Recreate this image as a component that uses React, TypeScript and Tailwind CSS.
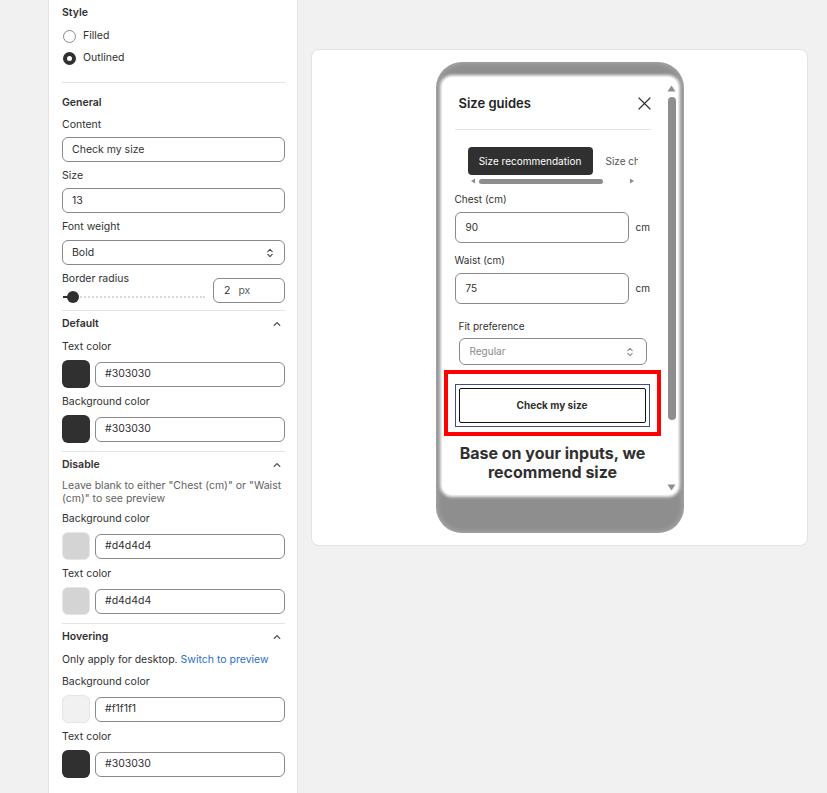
import type { ReactNode } from 'react';

function ChevronUp() {
  return (
    <svg width="10" height="10" viewBox="0 0 10 10" fill="none" className="text-[#4a4a4a]">
      <path d="M2.2 6.4 5 3.6l2.8 2.8" stroke="currentColor" strokeWidth="1.3" strokeLinecap="round" strokeLinejoin="round" />
    </svg>
  );
}

function SelectChevrons({ color = '#4a4a4a' }: { color?: string }) {
  return (
    <svg width="8" height="12" viewBox="0 0 8 12" fill="none">
      <path d="M1.8 4.6 4 2.4l2.2 2.2M1.8 7.4 4 9.6l2.2-2.2" stroke={color} strokeWidth="1.1" strokeLinecap="round" strokeLinejoin="round" />
    </svg>
  );
}

function Divider({ className = '' }: { className?: string }) {
  return <div className={`h-px bg-[#e3e3e3] ${className}`} />;
}

function Label({ children, className = '' }: { children: ReactNode; className?: string }) {
  return <p className={`text-[10.5px] leading-[14px] text-[#303030] ${className}`}>{children}</p>;
}

function TextInput({ value, className = '' }: { value: string; className?: string }) {
  return (
    <div className={`flex h-[25px] items-center rounded-[6px] border border-[#8a8a8a] bg-white px-[9px] text-[10.5px] text-[#303030] ${className}`}>
      {value}
    </div>
  );
}

function SectionHeader({ title, className = '' }: { title: string; className?: string }) {
  return (
    <div className={`flex h-[14px] items-center justify-between ${className}`}>
      <p className="text-[10.5px] font-semibold leading-[14px] text-[#303030]">{title}</p>
      <span className="mr-[3px]">
        <ChevronUp />
      </span>
    </div>
  );
}

function ColorRow({ swatch, value, className = '' }: { swatch: string; value: string; className?: string }) {
  const light = swatch !== '#303030';
  return (
    <div className={`flex items-center gap-[5px] ${className}`}>
      <div
        className={`h-[28px] w-[28px] shrink-0 rounded-[6px] ${light ? 'border border-[#e6e6e6]' : ''}`}
        style={{ backgroundColor: swatch }}
      />
      <TextInput value={value} className="flex-1" />
    </div>
  );
}

function SettingsPanel() {
  return (
    <aside className="min-h-[793px] w-[250px] shrink-0 border-x border-[#e3e3e3] bg-white pl-[13px] pr-[12px] pt-[6px]">
      <p className="text-[10.5px] font-semibold leading-[14px] text-[#303030]">Style</p>
      <div className="mt-[9px] flex h-[14px] items-center gap-[7px]">
        <span className="ml-px h-[13px] w-[13px] rounded-full border border-[#8a8a8a] bg-white" />
        <span className="text-[10.5px] text-[#303030]">Filled</span>
      </div>
      <div className="mt-[8px] flex h-[14px] items-center gap-[7px]">
        <span className="ml-px h-[13px] w-[13px] rounded-full border-[4px] border-[#303030] bg-white" />
        <span className="text-[10.5px] text-[#303030]">Outlined</span>
      </div>
      <Divider className="mt-[17px]" />

      <p className="mt-[13px] text-[10.5px] font-semibold leading-[14px] text-[#303030]">General</p>
      <Label className="mt-[8px]">Content</Label>
      <TextInput value="Check my size" className="mt-[5px]" />
      <Label className="mt-[7px]">Size</Label>
      <TextInput value="13" className="mt-[5px]" />
      <Label className="mt-[7px]">Font weight</Label>
      <div className="mt-[6px] flex h-[25px] items-center justify-between rounded-[6px] border border-[#8a8a8a] bg-white pl-[9px] pr-[10px] text-[10.5px] text-[#303030]">
        Bold
        <SelectChevrons />
      </div>
      <div className="mt-[7px] flex items-end gap-[8px]">
        <div className="flex-1">
          <Label>Border radius</Label>
          <div className="relative mt-[5px] flex h-[12px] items-center pl-px">
            <div className="h-[2px] w-[10px] bg-[#303030]" />
            <div className="h-0 flex-1 border-t-2 border-dotted border-[#d9d9d9]" />
            <span className="absolute left-[5px] top-0 h-[12px] w-[12px] rounded-full bg-[#303030]" />
          </div>
        </div>
        <div className="flex h-[25px] w-[72px] items-center gap-[8px] rounded-[6px] border border-[#8a8a8a] px-[10px] text-[10.5px] text-[#303030]">
          <span>2</span>
          <span className="text-[#616161]">px</span>
        </div>
      </div>
      <Divider className="mt-[7px]" />

      <SectionHeader title="Default" className="mt-[6px]" />
      <Label className="mt-[9px]">Text color</Label>
      <ColorRow swatch="#303030" value="#303030" className="mt-[6px]" />
      <Label className="mt-[7px]">Background color</Label>
      <ColorRow swatch="#303030" value="#303030" className="mt-[6px]" />
      <Divider className="mt-[8px]" />

      <SectionHeader title="Disable" className="mt-[6px]" />
      <p className="mt-[7px] text-[10.5px] leading-[13px] text-[#616161]">
        Leave blank to either "Chest (cm)" or "Waist (cm)" to see preview
      </p>
      <Label className="mt-[7px]">Background color</Label>
      <ColorRow swatch="#d4d4d4" value="#d4d4d4" className="mt-[6px]" />
      <Label className="mt-[7px]">Text color</Label>
      <ColorRow swatch="#d4d4d4" value="#d4d4d4" className="mt-[6px]" />
      <Divider className="mt-[8px]" />

      <SectionHeader title="Hovering" className="mt-[6px]" />
      <p className="mt-[9px] text-[10.5px] leading-[14px] text-[#303030]">
        Only apply for desktop. <span className="text-[#2c6ecb]">Switch to preview</span>
      </p>
      <Label className="mt-[8px]">Background color</Label>
      <ColorRow swatch="#f1f1f1" value="#f1f1f1" className="mt-[6px]" />
      <Label className="mt-[7px]">Text color</Label>
      <ColorRow swatch="#303030" value="#303030" className="mt-[6px]" />
    </aside>
  );
}

function PhoneScrollbar() {
  return (
    <div className="flex w-[12px] shrink-0 flex-col items-center pt-[8px] pb-[4px]">
      <svg width="9" height="7" viewBox="0 0 9 7">
        <path d="M4.5 0.5 8.5 6.5h-8z" fill="#8e8e8e" />
      </svg>
      <div className="mt-[5px] h-[323px] w-[8px] rounded-full bg-[#8e8e8e]" />
      <div className="flex-1" />
      <svg width="9" height="7" viewBox="0 0 9 7">
        <path d="M0.5 0.5h8l-4 6z" fill="#8e8e8e" />
      </svg>
    </div>
  );
}

function PhonePreview() {
  return (
    <div className="h-[471px] w-[248px] rounded-[26px] bg-[#8e8e8e] px-[6px] pt-[15px] shadow-[inset_0_0_6px_rgba(255,255,255,0.35)]">
      <div className="flex h-[418px] overflow-hidden rounded-[10px] bg-white shadow-[0_0_3px_2px_rgba(255,255,255,0.9)]">
        <div className="flex-1 overflow-hidden pl-[13px] pr-[15px]">
          <div className="flex items-center justify-between pl-[4px] pt-[18px]">
            <p className="text-[13px] font-semibold leading-[16px] text-[#222]">Size guides</p>
            <svg width="13" height="13" viewBox="0 0 13 13" fill="none">
              <path d="M1 1l11 11M12 1 1 12" stroke="#333" strokeWidth="1.2" strokeLinecap="round" />
            </svg>
          </div>
          <Divider className="mt-[18px]" />

          <div className="ml-[13px] mt-[17px] w-[170px] overflow-hidden">
            <div className="flex items-center gap-[13px] whitespace-nowrap">
              <span className="flex h-[28px] w-[125px] shrink-0 items-center justify-center rounded-[4px] bg-[#303030] text-[10px] text-white">
                Size recommendation
              </span>
              <span className="text-[10px] text-[#555]">Size chart</span>
            </div>
            <div className="mt-[2px] flex h-[8px] items-center">
              <svg width="6" height="6" viewBox="0 0 6 6" className="ml-[2px]">
                <path d="M5 0.5v5L1 3z" fill="#8e8e8e" />
              </svg>
              <div className="ml-[3px] h-[5px] w-[124px] rounded-full bg-[#8e8e8e]" />
              <div className="flex-1" />
              <svg width="6" height="6" viewBox="0 0 6 6" className="mr-[3px]">
                <path d="M1 0.5v5L5 3z" fill="#8e8e8e" />
              </svg>
            </div>
          </div>

          <p className="mt-[8px] text-[10px] leading-[13px] text-[#303030]">Chest (cm)</p>
          <div className="mt-[6px] flex items-center gap-[7px]">
            <div className="flex h-[31px] w-[174px] shrink-0 items-center rounded-[6px] border border-[#8a8a8a] pl-[10px] text-[10px] text-[#303030]">
              90
            </div>
            <span className="text-[10px] text-[#303030]">cm</span>
          </div>
          <p className="mt-[11px] text-[10px] leading-[13px] text-[#303030]">Waist (cm)</p>
          <div className="mt-[6px] flex items-center gap-[7px]">
            <div className="flex h-[31px] w-[174px] shrink-0 items-center rounded-[6px] border border-[#8a8a8a] pl-[10px] text-[10px] text-[#303030]">
              75
            </div>
            <span className="text-[10px] text-[#303030]">cm</span>
          </div>

          <div className="pl-[4px] pr-[4px]">
            <p className="mt-[16px] text-[10px] leading-[13px] text-[#303030]">Fit preference</p>
            <div className="mt-[5px] flex h-[27px] items-center justify-between rounded-[6px] border border-[#8a8a8a] pl-[10px] pr-[12px] text-[10px] text-[#8a8a8a]">
              Regular
              <SelectChevrons color="#8a8a8a" />
            </div>
          </div>

          <div className="-ml-[11px] mt-[5px] w-[217px] border-[4px] border-[#ff0000] px-[7px] pb-[5px] pt-[10px]">
            <div className="border border-[#3b4f8f] p-[3px]">
              <div className="flex h-[35px] items-center justify-center rounded-[2px] border border-[#111] text-[10px] font-bold text-[#303030]">
                Check my size
              </div>
            </div>
          </div>

          <p className="mt-[8px] text-center text-[16px] font-bold leading-[19px] text-[#303030]">
            Base on your inputs, we recommend size
          </p>
        </div>
        <PhoneScrollbar />
      </div>
    </div>
  );
}

export default function App() {
  return (
    <div className="flex min-h-[793px] w-[827px] bg-[#f1f1f1] font-['Inter',sans-serif]">
      <div className="w-[48px] shrink-0" />
      <SettingsPanel />
      <main className="flex-1 pl-[13px] pr-[19px] pt-[49px]">
        <div className="flex h-[497px] w-[497px] items-center justify-center rounded-[8px] border border-[#e3e3e3] bg-white">
          <PhonePreview />
        </div>
      </main>
    </div>
  );
}
